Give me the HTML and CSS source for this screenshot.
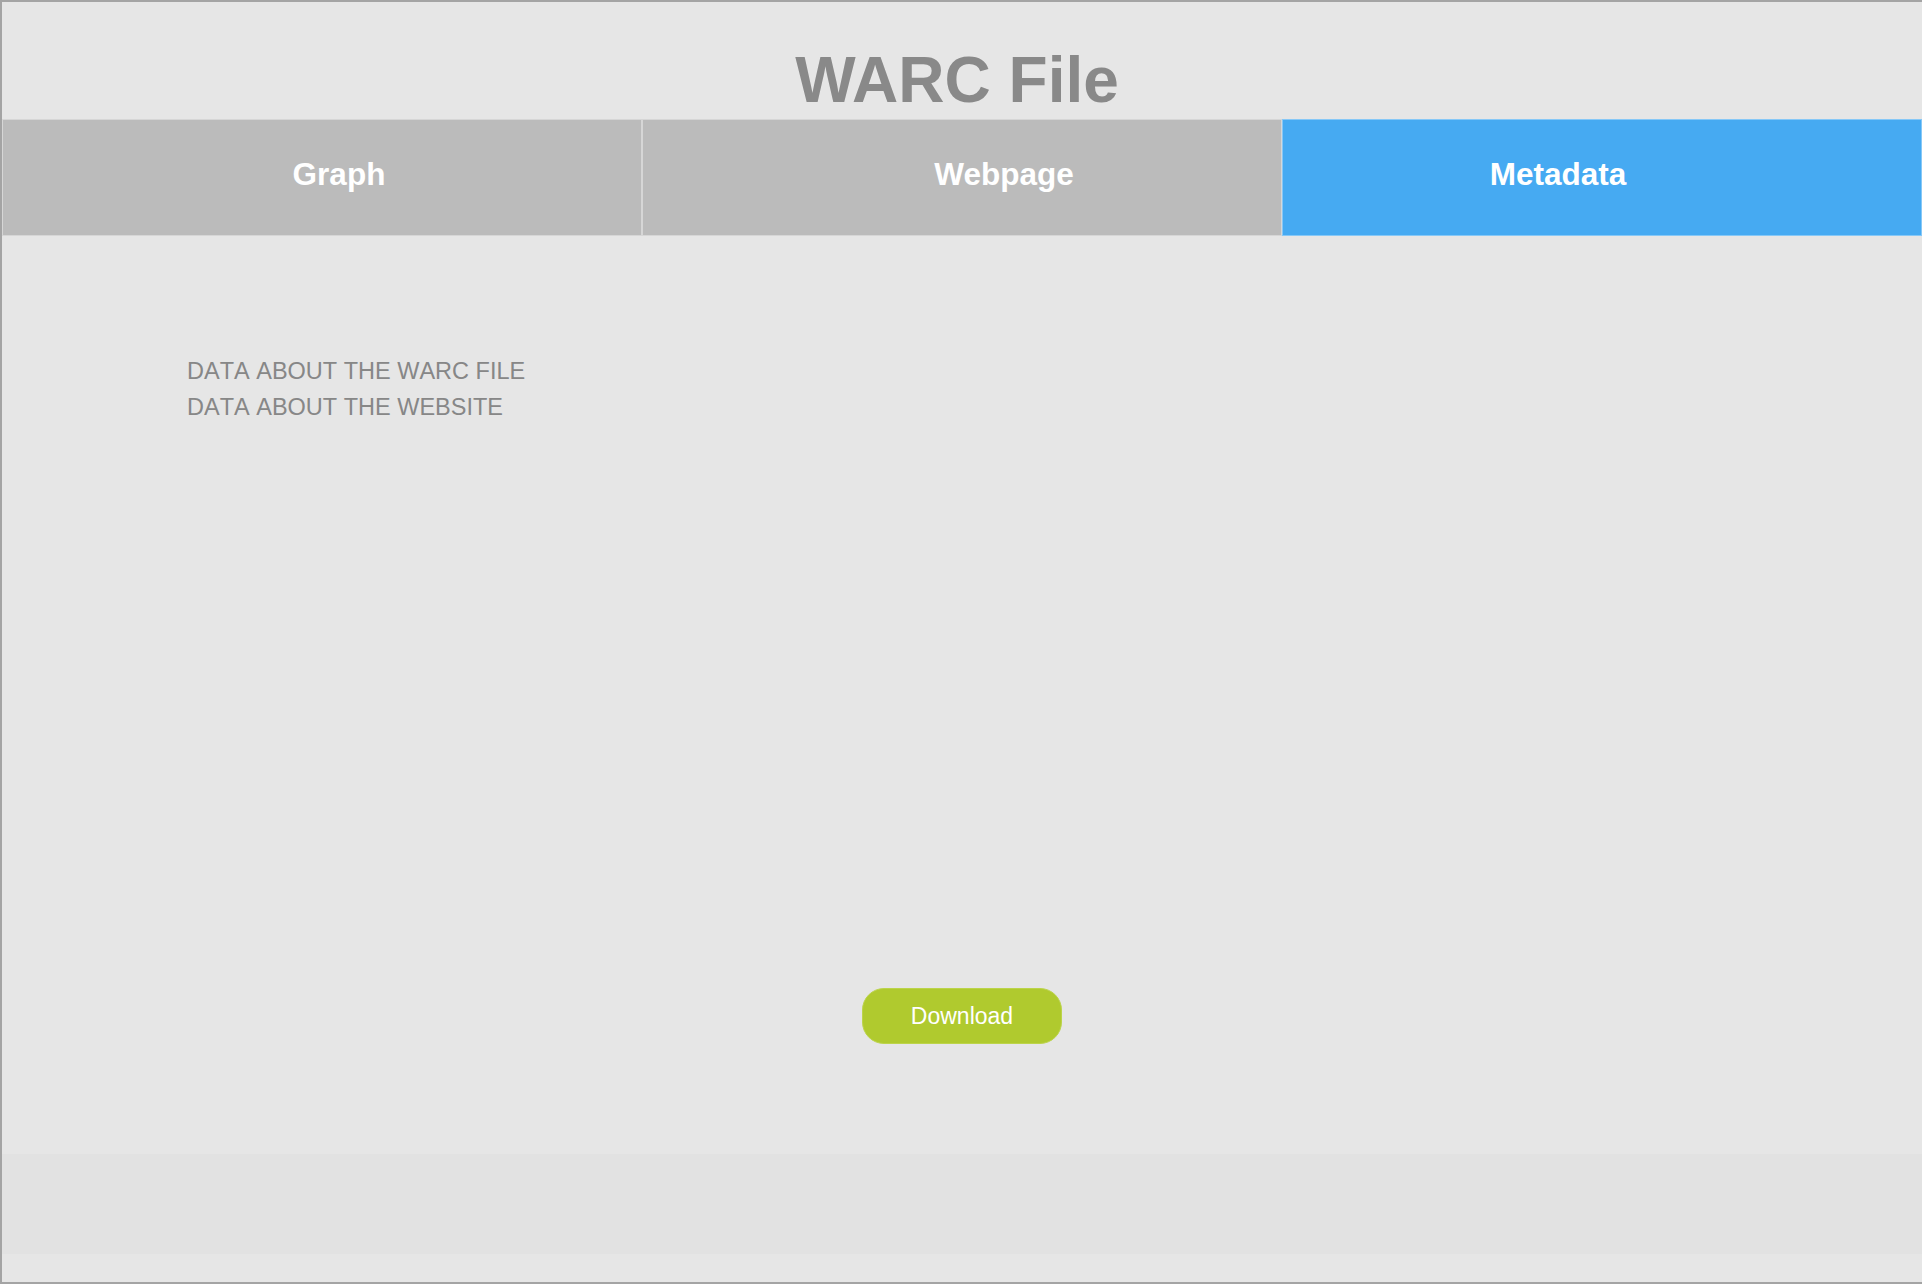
FILE: index.html
```html
<!DOCTYPE html>
<html lang="en">
<head>
<meta charset="utf-8">
<title>WARC File</title>
<link rel="stylesheet" href="styles.css">
</head>
<body>
<div class="page">
  <h1 class="title">WARC File</h1>
  <nav class="tabs">
    <div class="tab tab-graph">Graph</div>
    <div class="tab tab-webpage">Webpage</div>
    <div class="tab tab-metadata is-active">Metadata</div>
  </nav>
  <section class="meta">
    <p class="meta-line">DATA ABOUT THE WARC FILE</p>
    <p class="meta-line">DATA ABOUT THE WEBSITE</p>
  </section>
  <div class="actions">
    <button class="download" type="button">Download</button>
  </div>
  <footer class="footer"></footer>
</div>
</body>
</html>
```

FILE: styles.css
```css
html, body {
  margin: 0;
  padding: 0;
  background: #e6e6e6;
}

.page {
  box-sizing: border-box;
  height: 1284px;
  display: flex;
  flex-direction: column;
  background: #e6e6e6;
  border-top: 2px solid #a4a4a4;
  border-left: 2px solid #a4a4a4;
  border-bottom: 2px solid #a4a4a4;
  font-family: "Liberation Sans", Arial, sans-serif;
}

.title {
  margin: 0;
  padding-top: 46px;
  height: 64px;
  line-height: 64px;
  font-size: 64px;
  font-weight: bold;
  color: #898989;
  text-align: center;
  margin-bottom: 7px;
  padding-right: 10px;
}

.tabs {
  display: grid;
  grid-template-columns: 1fr 1fr 1fr;
  height: 117px;
}

.tab {
  box-sizing: border-box;
  display: flex;
  align-items: center;
  justify-content: center;
  background: #bbbbbb;
  border: 1px solid #d6d6d6;
  color: #ffffff;
  font-size: 31.5px;
  font-weight: bold;
  padding-bottom: 6px;
}

.tab-graph {
  padding-left: 34px;
}

.tab-webpage {
  padding-left: 84px;
}

.tab-metadata {
  padding-right: 88px;
}

.tab.is-active {
  background: #46aaf2;
  border-color: #86c8f7;
}

.meta {
  margin-top: 117px;
  padding-left: 185px;
}

.meta-line {
  margin: 0;
  font-size: 23.5px;
  line-height: 36px;
  color: #878787;
  font-kerning: none;
}

.actions {
  display: flex;
  justify-content: center;
  margin-top: 563px;
}

.download {
  box-sizing: border-box;
  width: 200px;
  height: 56px;
  border-radius: 22px;
  border: 1px solid #bcd44a;
  background: #b0ca2e;
  color: #ffffff;
  font-family: "Liberation Sans", Arial, sans-serif;
  font-size: 23px;
  padding: 0;
  cursor: pointer;
}

.footer {
  margin-top: 110px;
  height: 100px;
  background: #e2e2e2;
}
```
